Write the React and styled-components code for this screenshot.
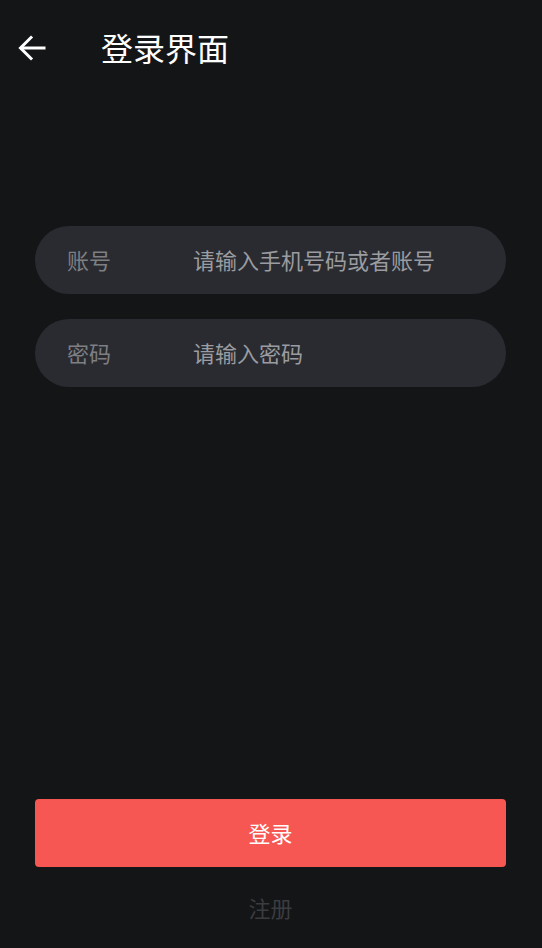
import React from 'react';
import styled, { createGlobalStyle } from 'styled-components';

const GlobalStyle = createGlobalStyle`
  html, body {
    margin: 0;
    padding: 0;
    background-color: #141517;
  }
  * {
    box-sizing: border-box;
  }
`;

const Page = styled.div`
  display: flex;
  flex-direction: column;
  height: 100vh;
  background-color: #141517;
  font-family: "Noto Sans CJK SC", "Noto Sans", sans-serif;
  color: #fff;
`;

const Header = styled.header`
  display: flex;
  align-items: center;
  height: 94px;
  padding-left: 17px;
`;

const BackButton = styled.button`
  display: flex;
  align-items: center;
  justify-content: center;
  width: 30px;
  height: 30px;
  margin-top: 2px;
  padding: 0;
  border: none;
  background: none;
  color: #fff;
  cursor: pointer;
`;

const Title = styled.h1`
  margin: 0 0 0 54px;
  font-size: 32px;
  font-weight: 400;
  line-height: 1;
`;

const Form = styled.div`
  display: flex;
  flex-direction: column;
  gap: 25px;
  margin-top: 132px;
  padding: 0 36px 0 35px;
`;

const Field = styled.label`
  display: flex;
  align-items: center;
  height: 68px;
  padding: 0 32px 2px;
  border-radius: 34px;
  background-color: #2a2b30;
`;

const FieldLabel = styled.span`
  width: 126px;
  flex-shrink: 0;
  font-size: 22px;
  color: #7e7f83;
`;

const Input = styled.input`
  flex: 1;
  min-width: 0;
  border: none;
  outline: none;
  background: transparent;
  font-family: inherit;
  font-size: 22px;
  color: #fff;
  padding: 0;
  &::placeholder {
    color: #9b9ca0;
  }
`;

const Bottom = styled.div`
  display: flex;
  flex-direction: column;
  margin-top: auto;
  padding: 0 36px 0 35px;
`;

const LoginButton = styled.button`
  height: 68px;
  padding: 0 0 2px;
  border: none;
  border-radius: 4px;
  background-color: #f75752;
  color: #fff;
  font-family: inherit;
  font-size: 22px;
  cursor: pointer;
`;

const RegisterLink = styled.div`
  display: flex;
  align-items: center;
  justify-content: center;
  height: 81px;
  padding-bottom: 2px;
  font-size: 22px;
  color: #3b3c3f;
`;

const ArrowLeft = () => (
  <svg width="30" height="30" viewBox="0 0 30 30" fill="none" stroke="currentColor" strokeWidth="3" strokeLinecap="square">
    <path d="M27 15H5" />
    <path d="M14 4.5L3.5 15L14 25.5" />
  </svg>
);

const App = () => {
  const [account, setAccount] = React.useState('');
  const [password, setPassword] = React.useState('');

  return (
    <Page>
      <GlobalStyle />
      <Header>
        <BackButton aria-label="返回">
          <ArrowLeft />
        </BackButton>
        <Title>登录界面</Title>
      </Header>
      <Form>
        <Field>
          <FieldLabel>账号</FieldLabel>
          <Input value={account} onChange={e => setAccount(e.target.value)} placeholder="请输入手机号码或者账号" />
        </Field>
        <Field>
          <FieldLabel>密码</FieldLabel>
          <Input type="password" value={password} onChange={e => setPassword(e.target.value)} placeholder="请输入密码" />
        </Field>
      </Form>
      <Bottom>
        <LoginButton>登录</LoginButton>
        <RegisterLink>注册</RegisterLink>
      </Bottom>
    </Page>
  );
};

export default App;
